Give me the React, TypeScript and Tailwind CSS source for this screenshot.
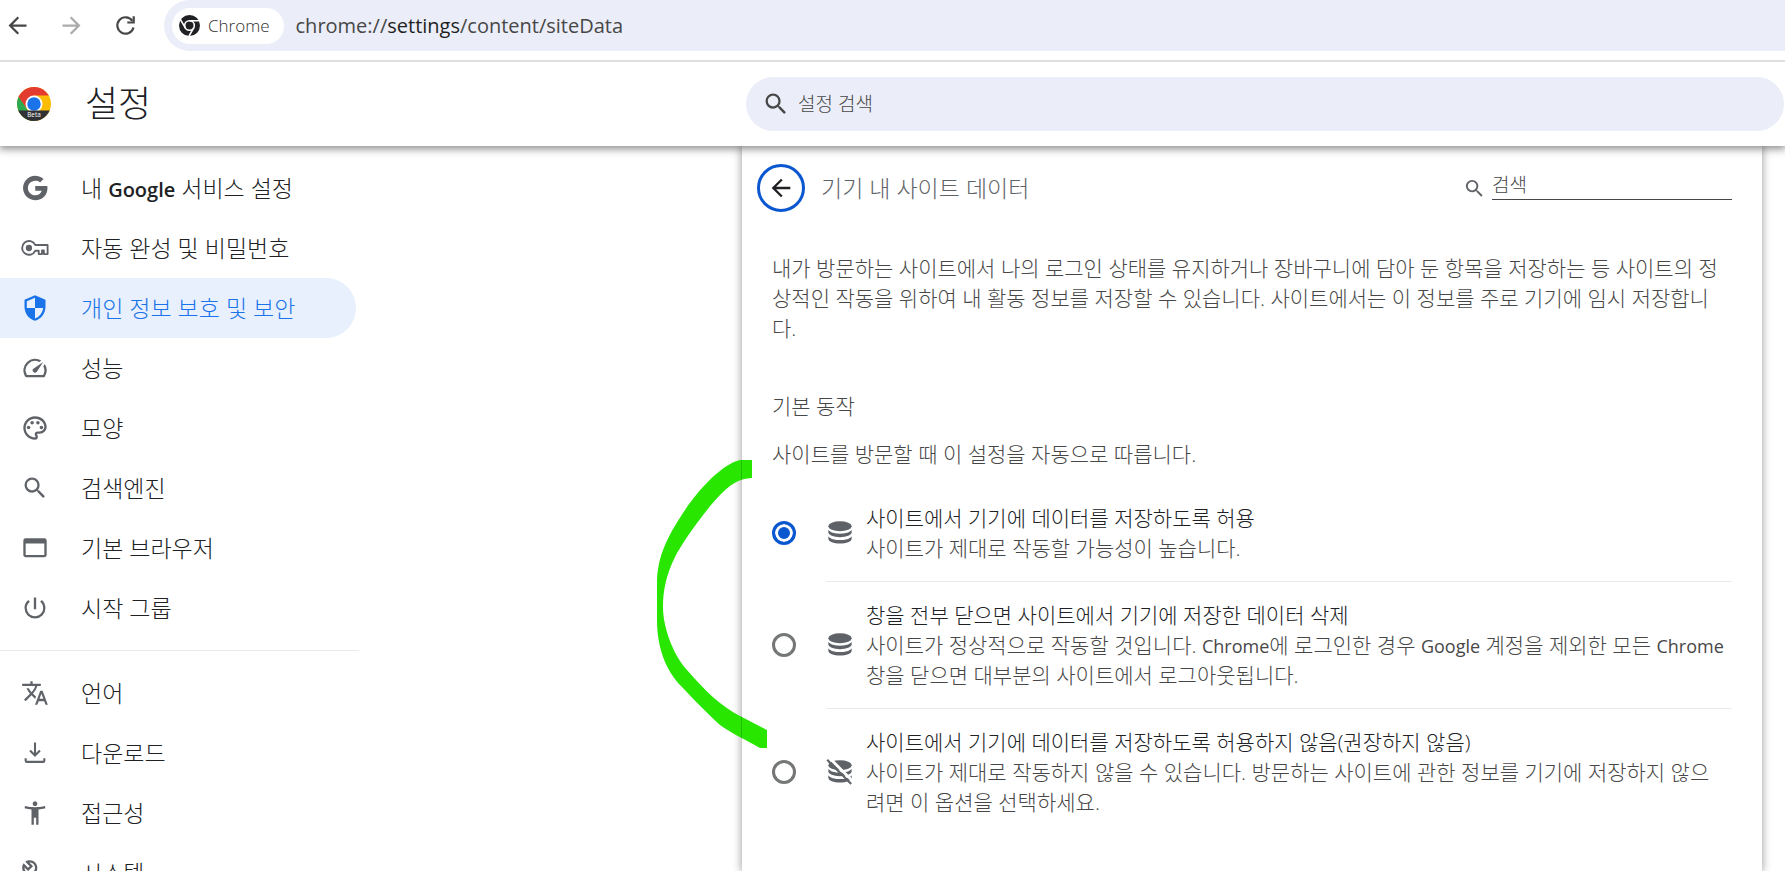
import { useState } from "react";
import type { ReactNode } from "react";
import {
  MdAccessibilityNew,
  MdArrowBack,
  MdArrowForward,
  MdOutlineBuild,
  MdOutlinePalette,
  MdPowerSettingsNew,
  MdSearch,
  MdTranslate,
} from "react-icons/md";

const navBase = "flex h-[60px] items-center gap-8 rounded-r-full pl-[21px] text-[23px]";

function Glyph({ children }: { children: ReactNode }) {
  return (
    <svg viewBox="0 0 24 24" className="size-7" fill="currentColor" aria-hidden="true">
      {children}
    </svg>
  );
}

const GoogleG = () => (
  <Glyph>
    <path d="M12.2 10.2v4.1h5.6c-.6 2.3-2.7 4-5.6 4a6.3 6.3 0 1 1 4.1-11.1l3-3A10.5 10.5 0 1 0 12.2 22.500c6.200 0 10.500-4.300 10.500-10.400 0-.7-.1-1.300-.2-1.900z" />
  </Glyph>
);

const Key = () => (
  <Glyph>
    <circle cx="6.800" cy="12" r="2.700" />
    <g fill="none" stroke="currentColor" strokeWidth="1.600" strokeLinejoin="round">
      <path d="M12.200 9.400H22.800V17.200H19.600V14H18V17.200H15.200V14.400H12.200A5.900 5.900 0 1 1 12.200 9.400Z" />
    </g>
  </Glyph>
);

const Shield = () => (
  <Glyph>
    <path d="M12 1 3 5v6c0 5.550 3.840 10.740 9 12 5.160-1.260 9-6.450 9-12V5l-9-4zm0 10.990h7c-.53 4.120-3.280 7.790-7 8.940V12H5V6.300l7-3.110v8.800z" />
  </Glyph>
);

const Speed = () => (
  <Glyph>
    <path d="m20.380 8.570-1.230 1.850a8 8 0 0 1-.22 7.580H5.070A8 8 0 0 1 15.580 6.850l1.850-1.230A10 10 0 0 0 3.350 19a2 2 0 0 0 1.720 1h13.850a2 2 0 0 0 1.740-1 10 10 0 0 0-.27-10.440zm-9.790 6.840a2 2 0 0 0 2.830 0l5.660-8.490-8.490 5.660a2 2 0 0 0 0 2.830z" />
  </Glyph>
);

const BrowserWindow = () => (
  <Glyph>
    <path d="M20 3H4a2 2 0 0 0-2 2v14c0 1.100.9 2 2 2h16a2 2 0 0 0 2-2V5a2 2 0 0 0-2-2zm0 16H4V8h16v11z" transform="translate(0 1) scale(1 .9)" />
  </Glyph>
);

const Download = () => (
  <Glyph>
    <path d="m12 15.500-4.900-4.900 1.300-1.300 2.700 2.700V3h1.800v9l2.700-2.700 1.300 1.300zM5 20.500a1.900 1.900 0 0 1-1.900-1.900V16.500h1.800v2.200h14.200v-2.200h1.800v2.100a1.900 1.900 0 0 1-1.900 1.900z" />
  </Glyph>
);

const Reload = () => (
  <svg viewBox="0 0 27 27" className="size-[27px]" fill="none" stroke="currentColor" strokeWidth="2.200" aria-hidden="true">
    <path d="M21.500 15.500A8.200 8.200 0 1 1 20.300 8.800" />
    <path d="M21.700 4.300v6.200h-6.400" />
  </svg>
);

const stackPaths = (
  <>
    <ellipse cx="12" cy="6.200" rx="10" ry="4.300" />
    <path d="M2 9.500c1.700 2.100 5.400 3.100 10 3.100s8.300-1 10-3.100v1.900c0 2.400-4.500 4.200-10 4.200S2 13.800 2 11.400z" />
    <path d="M2 15c1.700 2.100 5.400 3.100 10 3.100s8.300-1 10-3.100v1.900c0 2.400-4.500 4.200-10 4.200S2 19.300 2 16.900z" />
  </>
);

const DataStack = () => <Glyph>{stackPaths}</Glyph>;

const DataStackOff = () => (
  <Glyph>
    {stackPaths}
    <path d="M2.500-.5 25 22" stroke="white" strokeWidth="2.400" />
    <path d="m1 1.600 20.600 20.600" stroke="currentColor" strokeWidth="1.800" />
  </Glyph>
);

const ChromeMono = () => (
  <svg viewBox="0 0 24 24" className="size-[21px]" aria-hidden="true">
    <circle cx="12" cy="12" r="12" fill="#202124" />
    <g stroke="white" strokeWidth="1.800" fill="none">
      <circle cx="12" cy="12" r="5.500" />
      <path d="M12 6.500h11M7.200 14.750 1.500 5M16.800 14.750 11.500 24" />
    </g>
  </svg>
);

const ChromeBeta = () => (
  <svg viewBox="0 0 48 48" className="size-[34px]" role="img" aria-label="Chrome Beta">
    <clipPath id="disc">
      <circle cx="24" cy="24" r="24" />
    </clipPath>
    <g clipPath="url(#disc)">
      <path d="M0 0h48v48H0z" fill="#fbbc04" />
      <path d="M0 8 24 48H0z" fill="#2da94f" />
      <path d="M-2 8 13.600 30 24 12h24V0H0z" fill="#e33b2e" />
      <circle cx="24" cy="24" r="12" fill="white" />
      <circle cx="24" cy="24" r="9.500" fill="#1a73e8" />
      <path d="M0 33h48v15H0z" fill="#303134" />
    </g>
    <text x="24" y="42" textAnchor="middle" fontSize="9" fontFamily="Open Sans" fontWeight="400" fill="white">
      Beta
    </text>
  </svg>
);

const primaryNav: { label: ReactNode; icon: ReactNode; active?: boolean }[] = [
  { label: <>내 <b className="text-[20px] leading-none font-semibold">Google</b> 서비스 설정</>, icon: <GoogleG /> },
  { label: "자동 완성 및 비밀번호", icon: <Key /> },
  { label: "개인 정보 보호 및 보안", icon: <Shield />, active: true },
  { label: "성능", icon: <Speed /> },
  { label: "모양", icon: <MdOutlinePalette className="size-7" /> },
  { label: "검색엔진", icon: <MdSearch className="size-7" /> },
  { label: "기본 브라우저", icon: <BrowserWindow /> },
  { label: "시작 그룹", icon: <MdPowerSettingsNew className="size-7" /> },
];

const secondaryNav: typeof primaryNav = [
  { label: "언어", icon: <MdTranslate className="size-7" /> },
  { label: "다운로드", icon: <Download /> },
  { label: "접근성", icon: <MdAccessibilityNew className="size-7" /> },
  { label: "시스템", icon: <MdOutlineBuild className="size-7" /> },
];

const Latin = ({ children }: { children: string }) => (
  <span className="text-[18px] leading-none font-normal">{children}</span>
);

const options: { id: string; title: string; detail: ReactNode; icon: ReactNode }[] = [
  {
    id: "allow",
    title: "사이트에서 기기에 데이터를 저장하도록 허용",
    detail: "사이트가 제대로 작동할 가능성이 높습니다.",
    icon: <DataStack />,
  },
  {
    id: "session",
    title: "창을 전부 닫으면 사이트에서 기기에 저장한 데이터 삭제",
    detail: (
      <>
        사이트가 정상적으로 작동할 것입니다. <Latin>Chrome</Latin>에 로그인한 경우 <Latin>Google</Latin> 계정을 제외한 모든{" "}
        <Latin>Chrome</Latin> 창을 닫으면 대부분의 사이트에서 로그아웃됩니다.
      </>
    ),
    icon: <DataStack />,
  },
  {
    id: "block",
    title: "사이트에서 기기에 데이터를 저장하도록 허용하지 않음(권장하지 않음)",
    detail: (
      <>
        사이트가 제대로 작동하지 않을 수 있습니다. 방문하는 사이트에 관한 정보를 기기에 저장하지 않으
        <br />
        려면 이 옵션을 선택하세요.
      </>
    ),
    icon: <DataStackOff />,
  },
];

function NavList({ items }: { items: typeof primaryNav }) {
  return (
    <ul>
      {items.map((item, i) => (
        <li key={i}>
          <a
            href="#"
            aria-current={item.active ? "page" : undefined}
            className={item.active ? `${navBase} bg-[#e8f0fe] text-[#1a73e8]` : `${navBase} text-[#202124]`}
          >
            <span className={item.active ? "" : "text-[#5f6368]"}>{item.icon}</span>
            <span>{item.label}</span>
          </a>
        </li>
      ))}
    </ul>
  );
}

export default function App() {
  const [selected, setSelected] = useState("allow");

  return (
    <div className="flex h-screen flex-col overflow-hidden bg-white font-['Open_Sans','Noto_Sans_CJK_KR',sans-serif] font-light text-[#202124]">
      <div className="relative z-20 flex h-[62px] shrink-0 items-start border-b-2 border-[#dfdfe1] bg-white">
        <div className="flex h-[51px] items-center gap-[27px] pl-1 text-[#474747]">
          <button aria-label="뒤로"><MdArrowBack className="size-[27px]" /></button>
          <button aria-label="앞으로" className="text-[#ababab]"><MdArrowForward className="size-[27px]" /></button>
          <button aria-label="새로고침"><Reload /></button>
        </div>
        <div className="ml-[25px] flex h-[51px] flex-1 items-center gap-3 rounded-l-full bg-[#ebeef8] pl-2">
          <button className="flex h-9 items-center gap-2 rounded-full bg-white pr-[14px] pl-[7px] text-[17px] text-[#303030]">
            <ChromeMono />
            Chrome
          </button>
          <p className="text-[20px] font-normal text-[#474747]">
            chrome://<span className="text-[#1f1f1f]">settings</span>/content/siteData
          </p>
        </div>
      </div>

      <header className="relative z-10 flex h-[84px] shrink-0 items-center bg-white pr-px pl-[17px] shadow-[0_2px_8px_1px_rgba(0,0,0,0.45)]">
        <ChromeBeta />
        <h1 className="ml-[34px] flex-1 text-[36px]">설정</h1>
        <label className="flex h-[54px] w-[1038px] items-center gap-2 rounded-full bg-[#ebeef8] pl-4">
          <MdSearch className="size-7 text-[#474747]" />
          <span className="sr-only">설정 검색</span>
          <input placeholder="설정 검색" className="h-10 min-w-0 flex-1 bg-transparent text-[19px] outline-none placeholder:text-[#474747]" />
        </label>
      </header>

      <div className="flex min-h-0 flex-1">
        <nav aria-label="설정" className="w-[356px] shrink-0 pt-3">
          <NavList items={primaryNav} />
          <hr className="mt-3 mr-[-3px] mb-3 border-[#e8eaed]" />
          <NavList items={secondaryNav} />
        </nav>

        <main className="relative mr-[23px] ml-auto w-[1020px] bg-white px-[30px] shadow-[0_0_8px_1px_rgba(0,0,0,0.35)]">
          <svg viewBox="0 0 114 292" className="absolute top-[312px] -left-[86px] z-10 h-[292px] w-[114px]" aria-hidden="true">
            <path
              d="M96 2H84C66 6 42 32 27 55C12 78 1 98 1 126V162C1 190 10 213 26 229C36 240 52 256 64 267C72 273 84 279 104 290H111V272L84 258C66 249 48 232 31 212C16 195 7 168 7 149C7 133 10 117 19 99C27 83 52 49 64 37C72 29 82 20 96 20Z"
              fill="#28e600"
            />
            <path d="M85.500 2v20M85.500 258v22" stroke="black" strokeOpacity=".18" />
          </svg>
          <div className="-ml-[15px] flex h-[84px] items-center">
            <button aria-label="뒤로" className="grid size-12 place-items-center rounded-full border-[3px] border-[#0b57d0]">
              <MdArrowBack className="size-7" />
            </button>
            <h2 className="ml-4 flex-1 text-[23px] text-[#5f6368]">기기 내 사이트 데이터</h2>
            <label className="mb-[6px] flex items-end gap-[6px]">
              <MdSearch className="size-[23px] text-[#5f6368]" />
              <span className="sr-only">검색</span>
              <input placeholder="검색" className="h-[30px] w-60 border-b border-[#474747] text-[19px] outline-none placeholder:text-[#474747]" />
            </label>
          </div>

          <p className="mt-[23px] text-[21px] leading-[30px] text-[#474747]">
            내가 방문하는 사이트에서 나의 로그인 상태를 유지하거나 장바구니에 담아 둔 항목을 저장하는 등 사이트의 정상적인 작동을 위하여 내 활동 정보를 저장할 수 있습니다. 사이트에서는 이 정보를 주로 기기에 임시 저장합니다.
          </p>
          <h3 className="mt-12 text-[21px] leading-[30px] text-[#474747]">기본 동작</h3>
          <p className="mt-[18px] text-[21px] leading-[30px] text-[#474747]">사이트를 방문할 때 이 설정을 자동으로 따릅니다.</p>

          <fieldset className="mt-4">
            <legend className="sr-only">기본 동작</legend>
            {options.map((option, i) => (
              <label key={option.id} className="flex items-center">
                <input
                  type="radio"
                  name="site-data"
                  checked={selected === option.id}
                  onChange={() => setSelected(option.id)}
                  className="size-6 shrink-0 appearance-none rounded-full border-[3px] border-[#747775] checked:border-[#0b57d0] checked:bg-[#0b57d0] checked:shadow-[inset_0_0_0_3px_white]"
                />
                <span className={i === 0 ? "ml-[30px] flex flex-1 items-center gap-3 py-[18px]" : "ml-[30px] flex flex-1 items-center gap-3 border-t border-[#e8eaed] py-[18px]"}>
                  <span className="shrink-0 text-[#5f6368]">{option.icon}</span>
                  <span className="flex-1 text-[21px] leading-[30px]">
                    <span className="block">{option.title}</span>
                    <span className="block text-[#474747]">{option.detail}</span>
                  </span>
                </span>
              </label>
            ))}
          </fieldset>
        </main>
      </div>
    </div>
  );
}
